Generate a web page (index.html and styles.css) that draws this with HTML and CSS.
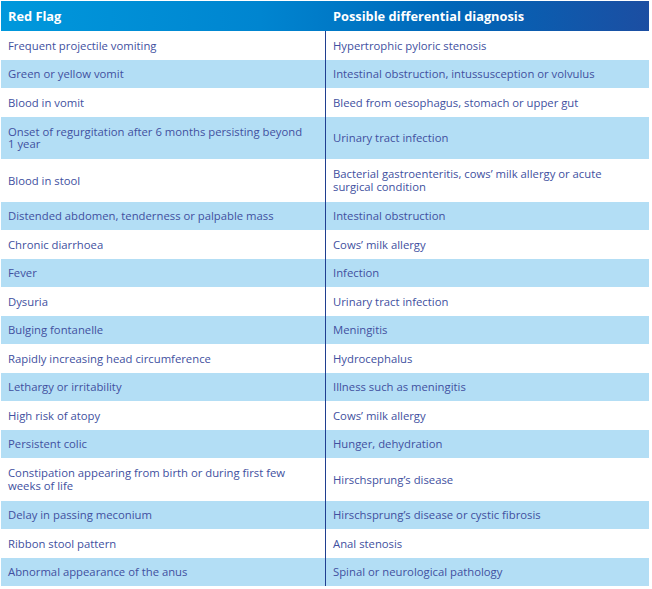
FILE: index.html
```html
<!DOCTYPE html>
<html>
<head>
<meta charset="utf-8">
<link rel="stylesheet" href="styles.css">
</head>
<body>
<div class="tbl">
  <div class="row head"><div class="cell">Red Flag</div><div class="cell">Possible differential diagnosis</div></div>
  <div class="row"><div class="cell">Frequent projectile vomiting</div><div class="cell">Hypertrophic pyloric stenosis</div></div>
  <div class="row alt"><div class="cell">Green or yellow vomit</div><div class="cell">Intestinal obstruction, intussusception or volvulus</div></div>
  <div class="row"><div class="cell">Blood in vomit</div><div class="cell">Bleed from oesophagus, stomach or upper gut</div></div>
  <div class="row alt tall"><div class="cell">Onset of regurgitation after 6 months persisting beyond 1 year</div><div class="cell">Urinary tract infection</div></div>
  <div class="row tall"><div class="cell">Blood in stool</div><div class="cell">Bacterial gastroenteritis, cows’ milk allergy or acute surgical condition</div></div>
  <div class="row alt"><div class="cell">Distended abdomen, tenderness or palpable mass</div><div class="cell">Intestinal obstruction</div></div>
  <div class="row"><div class="cell">Chronic diarrhoea</div><div class="cell">Cows’ milk allergy</div></div>
  <div class="row alt"><div class="cell">Fever</div><div class="cell">Infection</div></div>
  <div class="row"><div class="cell">Dysuria</div><div class="cell">Urinary tract infection</div></div>
  <div class="row alt"><div class="cell">Bulging fontanelle</div><div class="cell">Meningitis</div></div>
  <div class="row"><div class="cell">Rapidly increasing head circumference</div><div class="cell">Hydrocephalus</div></div>
  <div class="row alt"><div class="cell">Lethargy or irritability</div><div class="cell">Illness such as meningitis</div></div>
  <div class="row"><div class="cell">High risk of atopy</div><div class="cell">Cows’ milk allergy</div></div>
  <div class="row alt"><div class="cell">Persistent colic</div><div class="cell">Hunger, dehydration</div></div>
  <div class="row tall"><div class="cell">Constipation appearing from birth or during first few weeks of life</div><div class="cell">Hirschsprung’s disease</div></div>
  <div class="row alt"><div class="cell">Delay in passing meconium</div><div class="cell">Hirschsprung’s disease or cystic fibrosis</div></div>
  <div class="row"><div class="cell">Ribbon stool pattern</div><div class="cell">Anal stenosis</div></div>
  <div class="row alt"><div class="cell">Abnormal appearance of the anus</div><div class="cell">Spinal or neurological pathology</div></div>
</div>
</body>
</html>
```

FILE: styles.css
```css
html, body {
  margin: 0;
  padding: 0;
  background: #ffffff;
}
body {
  padding: 1px 3px 0 1px;
  font-family: "Open Sans", "Liberation Sans", sans-serif;
}
.tbl {
  width: 648px;
  display: flex;
  flex-direction: column;
}
.row {
  display: grid;
  grid-template-columns: 324px 324px;
  height: 28.5px;
  background: #ffffff;
}
.row.alt {
  background: #b3def5;
}
.row.tall {
  height: 42.5px;
}
.cell {
  display: flex;
  align-items: center;
  padding: 1px 18px 0 7px;
  font-size: 11.3px;
  line-height: 12.5px;
  color: #4150a0;
}
.row .cell + .cell {
  border-left: 1px solid #203f90;
  padding-left: 7px;
}
.row.head {
  height: 30px;
  background: linear-gradient(90deg, #0098dc 0%, #0085d0 40%, #0066b8 70%, #1c4ea2 100%);
}
.row.head .cell {
  color: #ffffff;
  font-weight: 700;
  font-size: 12.8px;
}
.row.head .cell + .cell {
  border-left: none;
  padding-left: 8px;
}
```
